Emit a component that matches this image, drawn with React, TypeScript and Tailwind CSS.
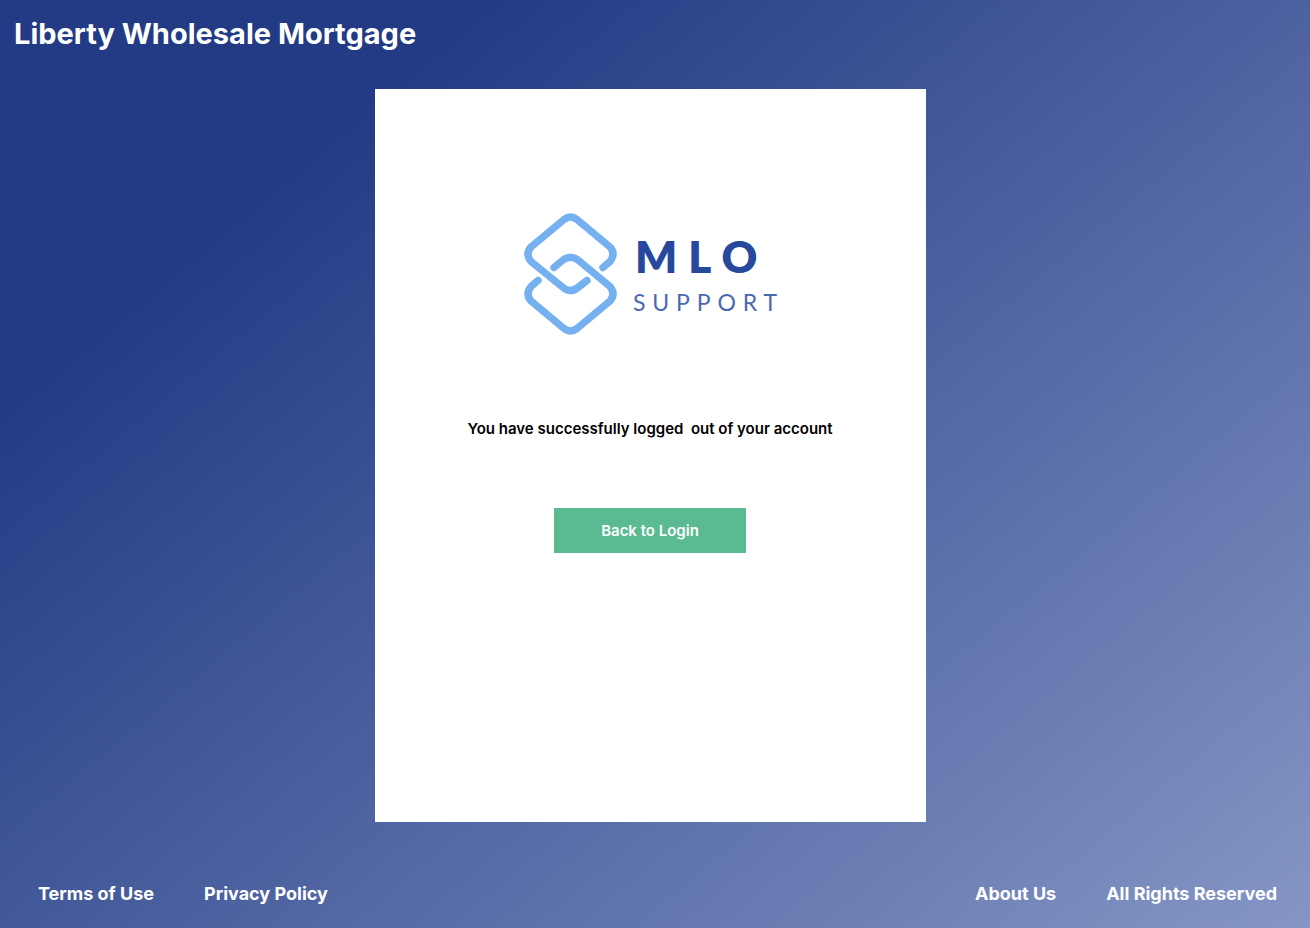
function Logo() {
  return (
    <div role="img" aria-label="MLO Support" className="flex items-center gap-4 pl-2">
      <svg
        aria-hidden="true"
        className="h-[122px] w-[93px] shrink-0"
        viewBox="0 0 93 122"
        fill="none"
        stroke="#75b1f1"
        strokeWidth="7.4"
        strokeLinecap="round"
        strokeLinejoin="round"
      >
        <path d="M79 54.500 L86 48.500 Q92 41 86 34 L53 6.500 Q46.500 1.500 40 6.500 L7 34 Q1 41 7 48.500 L39 74.500 Q46.500 80.500 54 74.500 L63 67.500" />
        <path d="M14 67.500 L7 73.500 Q1 81 7 88 L40 115.500 Q46.500 120.500 53 115.500 L86 88 Q92 81 86 73.500 L54 47 Q46.500 41.500 39 47 L30 54.500" />
      </svg>
      <div className="flex flex-col pt-1 font-['Lato',sans-serif]">
        <span className="pl-0.5 text-[44px] leading-[52px] font-extrabold tracking-[0.25em] text-[#27489d]">
          MLO
        </span>
        <span className="text-[23px] leading-10 font-normal tracking-[0.3em] text-[#4a68b0]">
          SUPPORT
        </span>
      </div>
    </div>
  );
}

export default function App() {
  return (
    <div className="flex min-h-screen flex-col bg-[linear-gradient(140deg,#223b84_20%,#8596c5_100%)] font-['Inter',sans-serif] text-white">
      <header className="px-3.5 pt-3.5">
        <h1 className="text-[29px] leading-10 font-bold">Liberty Wholesale Mortgage</h1>
      </header>

      <main className="flex flex-1 justify-center pt-[35px] pr-[10px]">
        <section className="flex w-[551px] max-w-full flex-col items-center bg-white pt-[124px]">
          <Logo />
          <p className="mt-[82px] text-[15px] leading-6 font-semibold whitespace-pre text-black">
            {"You have successfully logged  out of your account"}
          </p>
          <button
            type="button"
            className="mt-[67px] h-[45px] w-48 bg-[#5abb92] pt-0.5 text-[15px] font-semibold text-white"
          >
            Back to Login
          </button>
        </section>
      </main>

      <footer className="flex items-center justify-between pt-[59px] pr-[33px] pb-[22px] pl-[38px] text-lg leading-[25px] font-bold">
        <nav aria-label="Legal" className="flex gap-[50px]">
          <a href="#terms">Terms of Use</a>
          <a href="#privacy">Privacy Policy</a>
        </nav>
        <nav aria-label="Company" className="flex gap-[50px]">
          <a href="#about">About Us</a>
          <a href="#rights">All Rights Reserved</a>
        </nav>
      </footer>
    </div>
  );
}
